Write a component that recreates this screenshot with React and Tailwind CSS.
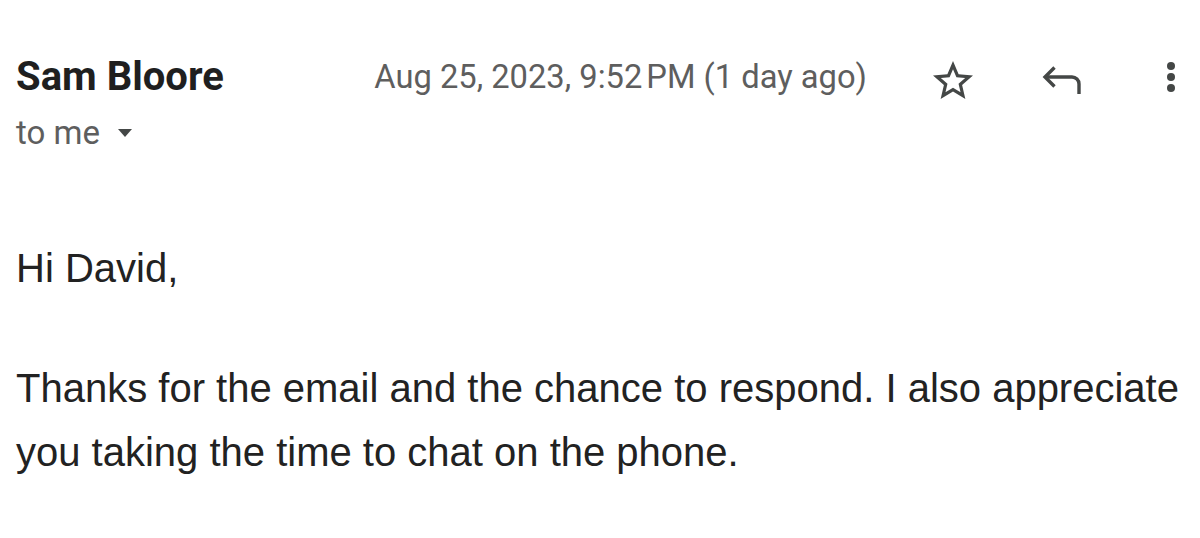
import React from 'react'

const StarIcon = () => (
  <svg width="44" height="44" viewBox="0 0 44 44" fill="#444746" className="overflow-visible">
    <path
      transform="translate(-2 2) scale(2)"
      d="M22 9.24l-7.19-.62L12 2 9.19 8.63 2 9.24l5.46 4.73L5.82 21 12 17.27 18.18 21l-1.63-7.03L22 9.24zM12 15.4l-3.76 2.27 1-4.28-3.32-2.88 4.38-.38L12 6.1l1.71 4.04 4.38.38-3.32 2.88 1 4.28L12 15.4z"
    />
  </svg>
)

const ReplyIcon = () => (
  <svg width="40" height="40" viewBox="0 0 40 40" fill="none" stroke="#444746" strokeWidth="3.4" strokeLinecap="butt" strokeLinejoin="miter">
    <path d="M12.5 10.5L3 20l9.5 9.5" />
    <path d="M3 20h27a7 7 0 0 1 7 7v10" />
  </svg>
)

const MoreIcon = () => (
  <svg width="40" height="40" viewBox="0 0 40 40" fill="#444746">
    <circle cx="20" cy="9" r="4" />
    <circle cx="20" cy="20" r="4" />
    <circle cx="20" cy="31" r="4" />
  </svg>
)

export default function App() {
  return (
    <div className="w-[1200px] h-[538px] bg-white overflow-hidden pl-4 pt-[53px]">
      <div className="flex items-start">
        <div className="flex flex-col">
          <div className="font-['Roboto',sans-serif] font-bold text-[40px] leading-[48px] text-[#1f1f1f]">
            Sam Bloore
          </div>
          <div className="mt-[10px] flex items-center gap-[18px] font-['Roboto',sans-serif] text-[33px] leading-[44px] text-[#5e5e5e]">
            <span>to me</span>
            <svg width="14" height="8" viewBox="0 0 14 8" fill="#444746">
              <path d="M0 0l7 8 7-8z" />
            </svg>
          </div>
        </div>
        <div className="ml-auto flex items-center h-[48px] pr-[9px]">
          <span className="font-['Roboto',sans-serif] text-[32.7px] leading-[48px] text-[#5e5e5e]">
            Aug 25, 2023, 9:52&#8239;PM (1 day ago)
          </span>
          <div className="ml-[64px] flex items-center">
            <StarIcon />
            <div className="ml-[67px]">
              <ReplyIcon />
            </div>
            <div className="ml-[69px]">
              <MoreIcon />
            </div>
          </div>
        </div>
      </div>
      <div className="mt-[81px] font-['Liberation_Sans',Arial,sans-serif] text-[40px] leading-[64px] text-[#222222] w-[1184px]">
        <p>Hi David,</p>
        <p className="mt-[56px]">
          Thanks for the email and the chance to respond. I also appreciate you taking the time to chat on the phone.
        </p>
      </div>
    </div>
  )
}
